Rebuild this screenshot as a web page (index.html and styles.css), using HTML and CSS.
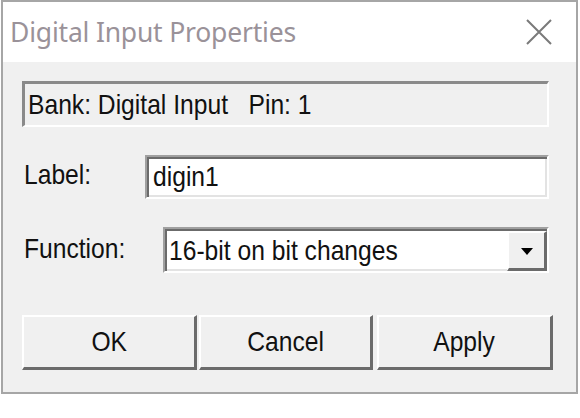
FILE: index.html
```html
<!DOCTYPE html>
<html>
<head>
<meta charset="utf-8">
<link rel="stylesheet" href="styles.css">
</head>
<body>
<div class="window">
  <div class="titlebar">
    <span class="title">Digital Input Properties</span>
    <svg class="close" width="26" height="26" viewBox="0 0 26 26"><path d="M1 1L25 25M25 1L1 25" stroke="#7a7a7a" stroke-width="2" fill="none"/></svg>
  </div>
  <div class="body">
    <div class="static"><span class="t">Bank: Digital Input&nbsp;&nbsp; Pin: 1</span></div>
    <div class="row row-label">
      <span class="lbl lbl-label"><span class="t">Label:</span></span>
      <div class="edit"><span class="t">digin1</span></div>
    </div>
    <div class="row row-func">
      <span class="lbl lbl-func"><span class="t">Function:</span></span>
      <div class="combo">
        <span class="combo-text"><span class="t">16-bit on bit changes</span></span>
        <span class="drop"><span class="tri"></span></span>
      </div>
    </div>
    <div class="buttons">
      <div class="btn btn-ok"><span class="t tc">OK</span></div>
      <div class="btn btn-cancel"><span class="t tc">Cancel</span></div>
      <div class="btn btn-apply"><span class="t tc">Apply</span></div>
    </div>
  </div>
</div>
</body>
</html>
```
FILE: styles.css
```css
html, body {
  margin: 0;
  padding: 0;
  background: #ffffff;
}
.window {
  margin: 0 0 0 1px;
  width: 573px;
  border: 2px solid #a6a6a6;
  background: #fff;
}
.titlebar {
  height: 60px;
  display: flex;
  align-items: center;
  justify-content: space-between;
  padding: 0 24px 0 7px;
  background: #fff;
}
.title {
  font-family: "Noto Sans", "Open Sans", sans-serif;
  font-size: 26.5px;
  color: #9a9299;
  letter-spacing: -0.2px;
}
.close {
  display: block;
}
.body {
  height: 311px;
  background: #f0f0f0;
  padding: 19px 0 0 19px;
  font-family: "Liberation Sans", Arial, sans-serif;
  font-size: 28px;
  color: #111;
}
.t {
  display: inline-block;
  white-space: nowrap;
  transform: scaleX(0.88);
  transform-origin: left center;
}
.tc {
  transform-origin: center center;
}
.static {
  box-sizing: border-box;
  width: 527px;
  height: 46px;
  border-style: solid;
  border-width: 3px 2px 2px 3px;
  border-color: #8a8a8a #ffffff #ffffff #8a8a8a;
  display: flex;
  align-items: center;
  padding-left: 3px;
  line-height: 1;
}
.row {
  display: flex;
  align-items: center;
}
.row-label {
  margin-top: 28px;
}
.row-func {
  margin-top: 28px;
}
.lbl {
  padding-left: 2px;
  line-height: 1;
}
.lbl-label {
  width: 121px;
  margin-top: -4px;
}
.lbl-func {
  width: 139px;
  margin-top: -2px;
}
.edit {
  box-sizing: border-box;
  width: 404px;
  height: 44px;
  background: #fff;
  border-style: solid;
  border-width: 2px;
  border-color: #a0a0a0 #ffffff #ffffff #a0a0a0;
  box-shadow: inset 2px 2px 0 #6b6b6b, inset -2px -2px 0 #e3e3e3;
  display: flex;
  align-items: center;
  padding-left: 6px;
  line-height: 1;
}
.combo {
  box-sizing: border-box;
  width: 386px;
  height: 46px;
  background: #fff;
  border-style: solid;
  border-width: 2px;
  border-color: #a0a0a0 #ffffff #ffffff #a0a0a0;
  box-shadow: inset 2px 2px 0 #6b6b6b, inset -2px -2px 0 #e3e3e3;
  display: flex;
  align-items: stretch;
  padding: 2px 0 0 2px;
  line-height: 1;
}
.combo-text {
  flex: 1;
  display: flex;
  align-items: center;
  padding-left: 2px;
}
.drop {
  box-sizing: border-box;
  width: 40px;
  background: #f0f0f0;
  border-style: solid;
  border-width: 2px 3px 3px 2px;
  border-color: #ffffff #6b6b6b #6b6b6b #ffffff;
  display: flex;
  align-items: center;
  justify-content: center;
}
.tri {
  width: 0;
  height: 0;
  margin-top: 2px;
  border-left: 6px solid transparent;
  border-right: 6px solid transparent;
  border-top: 7px solid #000;
}
.buttons {
  display: flex;
  margin-top: 42px;
  gap: 2px;
}
.btn {
  box-sizing: border-box;
  height: 55px;
  display: flex;
  align-items: center;
  justify-content: center;
  background: #f0f0f0;
  border-style: solid;
  border-width: 2px 3px 3px 2px;
  border-color: #ffffff #6b6b6b #6b6b6b #ffffff;
  line-height: 1;
}
.btn-ok { width: 175px; }
.btn-cancel { width: 174px; }
.btn-apply { width: 176px; margin-left: 2px; }
```
